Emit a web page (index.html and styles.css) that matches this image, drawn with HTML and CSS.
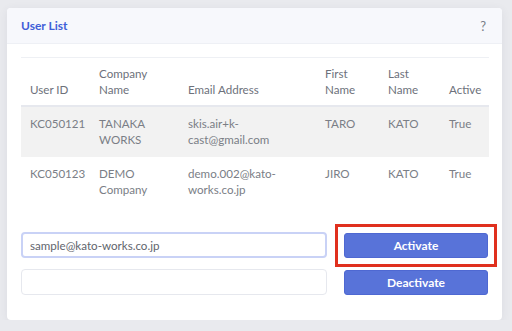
FILE: index.html
```html
<!DOCTYPE html>
<html>
  <head>
    <meta charset="UTF-8">
    <title>User List</title>
    <link rel="stylesheet" href="styles.css">
  </head>
  <body>
    <section class="card">
      <div class="card__header">
        <h2 class="card__title">User List</h2>
        <span class="card__help">?</span>
      </div>
      <div class="card__body">
        <table class="user-table">
          <thead>
            <tr>
              <th class="col-id">User ID</th>
              <th class="col-company">Company Name</th>
              <th class="col-email">Email Address</th>
              <th class="col-first">First Name</th>
              <th class="col-last">Last Name</th>
              <th class="col-active">Active</th>
            </tr>
          </thead>
          <tbody>
            <tr class="is-striped">
              <td>KC050121</td>
              <td>TANAKA WORKS</td>
              <td>skis.air+k-<br>cast@gmail.com</td>
              <td>TARO</td>
              <td>KATO</td>
              <td>True</td>
            </tr>
            <tr>
              <td>KC050123</td>
              <td>DEMO Company</td>
              <td>demo.002@kato-<br>works.co.jp</td>
              <td>JIRO</td>
              <td>KATO</td>
              <td>True</td>
            </tr>
          </tbody>
        </table>

        <div class="actions">
          <div class="actions__row">
            <input class="field field--focus" type="text" value="sample@kato-works.co.jp">
            <span class="highlight"><button class="btn">Activate</button></span>
          </div>
          <div class="actions__row">
            <input class="field" type="text">
            <button class="btn">Deactivate</button>
          </div>
        </div>
      </div>
    </section>
  </body>
</html>
```

FILE: styles.css
```css
* {
  box-sizing: border-box;
}
body {
  margin: 0;
  padding: 8px 10px 0 7px;
  background-color: #e9eaee;
  font-family: Lato, "Open Sans", sans-serif;
  color: #74787f;
}

.card {
  background-color: #fff;
  border-radius: 4px;
  box-shadow: 0 2px 10px rgba(60, 64, 90, 0.08);
}
.card__header {
  display: flex;
  justify-content: space-between;
  align-items: center;
  height: 36px;
  padding: 0 16px 0 14px;
  background-color: #f7f8fc;
  border-bottom: solid 1px #eef0f5;
  border-radius: 4px 4px 0 0;
}
.card__title {
  margin: 0;
  font-size: 12px;
  font-weight: 700;
  color: #3f5fd8;
}
.card__help {
  font-size: 13px;
  color: #7a7e88;
}
.card__body {
  padding: 13px 13px 25px 14px;
}

.user-table {
  width: 468px;
  border-collapse: collapse;
  table-layout: fixed;
  font-size: 11.6px;
  line-height: 16px;
  border-top: solid 1px #eef0f4;
}
.user-table th,
.user-table td {
  padding: 9px 9px;
  text-align: left;
  vertical-align: top;
  font-weight: 400;
}
.user-table th {
  padding: 8px 9px 7px;
  vertical-align: bottom;
  color: #6d717b;
  border-bottom: solid 2px #e6e8ee;
}
.user-table td {
  color: #7a7e86;
}
.is-striped {
  background-color: #f2f2f2;
}
.col-id { width: 69px; }
.col-company { width: 89px; }
.col-email { width: 137px; }
.col-first { width: 63px; }
.col-last { width: 61px; }
.col-active { width: 49px; }

.actions {
  display: flex;
  flex-direction: column;
  gap: 11px;
  margin-top: 25px;
}
.actions__row {
  display: flex;
  align-items: center;
  gap: 17px;
}
.field {
  width: 306px;
  height: 26px;
  padding: 0 8px;
  border: solid 1px #e6e8ee;
  border-radius: 4px;
  font-family: inherit;
  font-size: 11.6px;
  color: #61656d;
  outline: none;
}
.field--focus {
  border: solid 2px #c9d2f6;
  padding: 0 7px;
}
.btn {
  width: 144px;
  height: 25px;
  border: solid 1px #4e68d2;
  border-radius: 3px;
  background-color: #5873d9;
  color: #fff;
  font-family: inherit;
  font-size: 12px;
  font-weight: 700;
}
/* red annotation box round the Activate button */
.highlight {
  display: flex;
  margin: -9px;
  padding: 6px;
  border: solid 3px #e0301e;
}
```
